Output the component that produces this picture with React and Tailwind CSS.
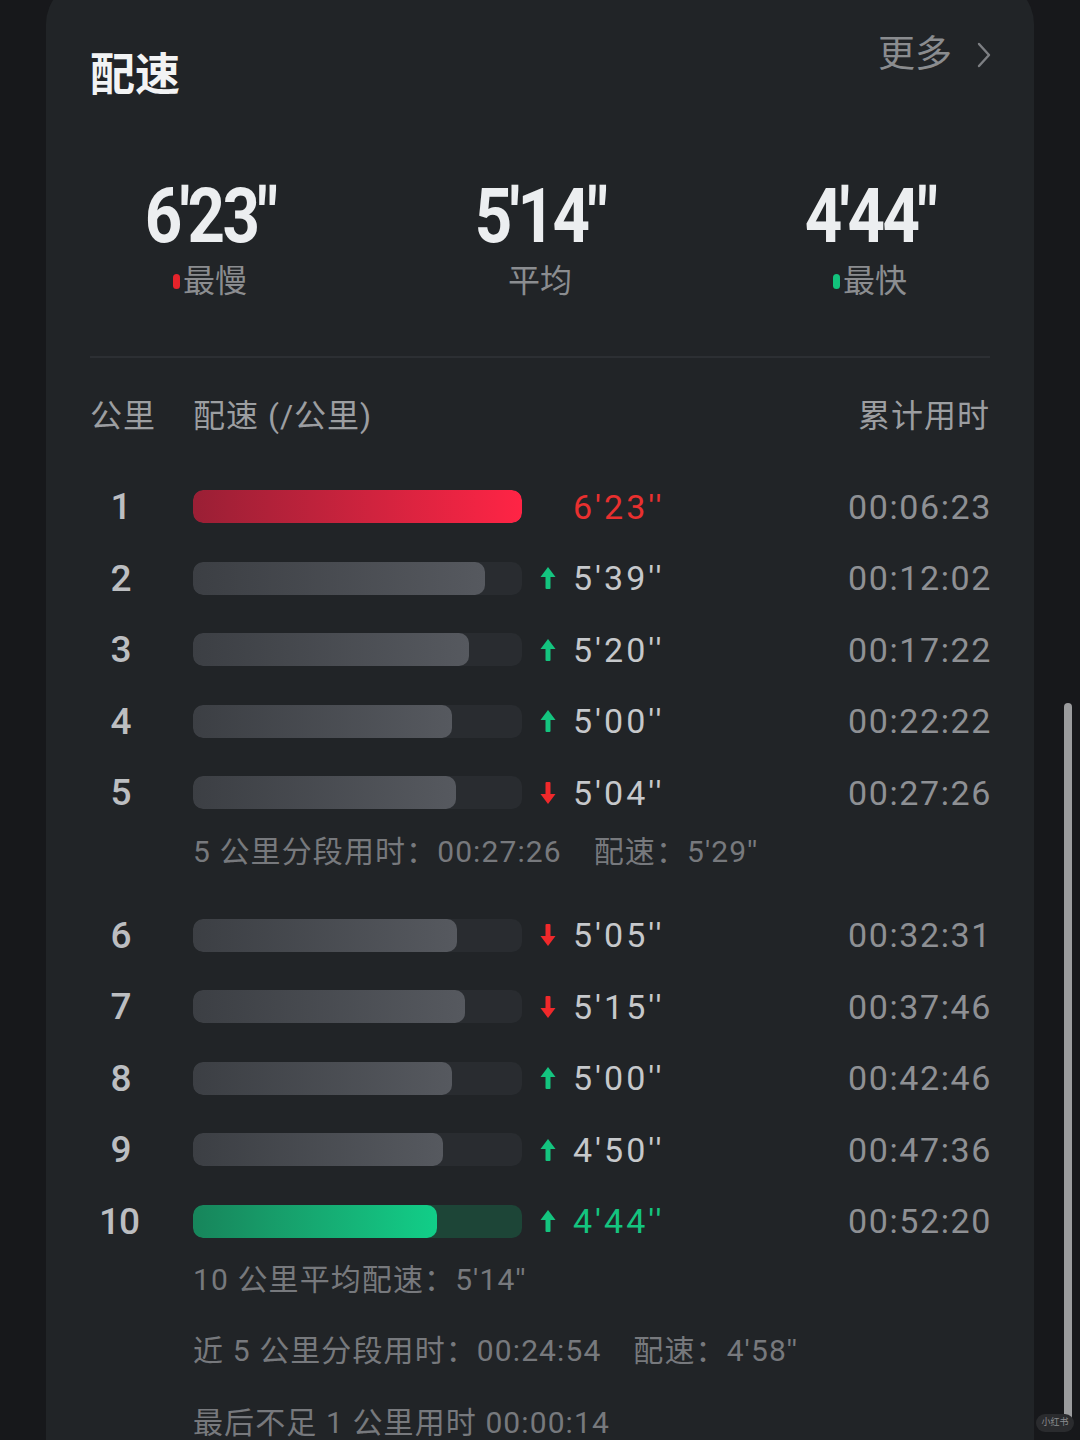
import React from "react";

const CJK = "font-['Roboto','Noto_Sans_CJK_SC',sans-serif]";

const SPLITS = [
  { km: "1", fill: 329, pace: "6'23''", time: "00:06:23", kind: "slow" },
  { km: "2", fill: 292, pace: "5'39''", time: "00:12:02", dir: "up" },
  { km: "3", fill: 276, pace: "5'20''", time: "00:17:22", dir: "up" },
  { km: "4", fill: 259, pace: "5'00''", time: "00:22:22", dir: "up" },
  { km: "5", fill: 263, pace: "5'04''", time: "00:27:26", dir: "down" },
  { km: "6", fill: 264, pace: "5'05''", time: "00:32:31", dir: "down" },
  { km: "7", fill: 272, pace: "5'15''", time: "00:37:46", dir: "down" },
  { km: "8", fill: 259, pace: "5'00''", time: "00:42:46", dir: "up" },
  { km: "9", fill: 250, pace: "4'50''", time: "00:47:36", dir: "up" },
  { km: "10", fill: 244, pace: "4'44''", time: "00:52:20", dir: "up", kind: "fast" },
];

const Arrow = ({ dir }) => {
  const color = dir === "up" ? "#14c47f" : "#f0292b";
  return (
    <svg width="16" height="24" viewBox="0 0 16 24" className={dir === "down" ? "rotate-180" : ""}>
      <polygon points="8,1 15.5,11 0.5,11" fill={color} />
      <rect x="5.5" y="10" width="5" height="13" rx="1" fill={color} />
    </svg>
  );
};

const SplitRow = ({ s }) => {
  const track =
    s.kind === "fast" ? "bg-[#1d4537]" : s.kind === "slow" ? "bg-[#2a2d31]" : "bg-[#292c30]";
  const fill =
    s.kind === "slow"
      ? "bg-gradient-to-r from-[#9a1f35] to-[#ff2445]"
      : s.kind === "fast"
      ? "bg-gradient-to-r from-[#17855b] to-[#11ce88]"
      : "bg-gradient-to-r from-[#3c3f44] to-[#56595f]";
  const paceColor =
    s.kind === "slow" ? "text-[#e9302f]" : s.kind === "fast" ? "text-[#14c47f]" : "text-[#c6c8cb]";
  return (
    <div className="flex items-center h-[71.5px]">
      <div
        className={`w-[62px] text-center text-[37px] leading-none font-medium text-[#bcbec1] font-['Roboto',sans-serif] ${
          s.km === "10" ? "tracking-[-1px] -ml-[2px]" : ""
        }`}
      >
        {s.km}
      </div>
      <div className={`ml-[41px] w-[329px] h-[33px] rounded-[10px] overflow-hidden ${track} ${s.km === "10" ? "ml-[43px]" : ""}`}>
        <div className={`h-full rounded-[10px] ${fill}`} style={{ width: s.fill }} />
      </div>
      <div className="ml-[18px] w-[16px] flex items-center">{s.dir && s.kind !== "slow" ? <Arrow dir={s.dir} /> : null}</div>
      <div className={`ml-[17px] text-[34px] leading-none tracking-[3px] font-['Roboto',sans-serif] ${paceColor}`}>
        {s.pace}
      </div>
      <div className="flex-1 -mr-[2px] text-right text-[34px] leading-none tracking-[1.6px] text-[#8e9094] font-['Roboto',sans-serif]">
        {s.time}
      </div>
    </div>
  );
};

const Stat = ({ value, label, dot }) => (
  <div className="flex flex-col items-center w-[300px]">
    <div className="h-[80px] flex items-center justify-center">
      <span className="inline-block scale-x-[0.86] text-[76px] leading-none font-bold tracking-[-3px] text-[#eceef0] font-['Roboto',sans-serif]">
        {value}
      </span>
    </div>
    <div className={`mt-[5px] h-[40px] flex items-center text-[32px] leading-none text-[#8b8d90] ${CJK}`}>
      {dot && <span className={`mr-[3px] w-[7px] h-[15px] rounded-full ${dot}`} />}
      {label}
    </div>
  </div>
);

const Note = ({ children, className = "" }) => (
  <div className={`h-[40px] flex items-center pl-[103px] text-[30px] leading-none tracking-[1.1px] text-[#77797d] ${CJK} ${className}`}>
    {children}
  </div>
);

export default function App() {
  return (
    <div className="relative w-[1080px] h-[1440px] overflow-hidden bg-[#17181b]">
      <div className="mx-[46px] -mt-[20px] rounded-t-[44px] bg-[#212427] px-[44px] pt-[57px] pb-[60px]">
        {/* header */}
        <div className="flex items-start justify-between">
          <h1 className={`mt-[16px] text-[45px] leading-[45px] font-bold text-[#f2f3f4] ${CJK}`}>配速</h1>
          <div className={`flex items-center -mr-[2px] text-[37px] leading-[36px] text-[#8a8c8f] ${CJK}`}>
            更多
            <svg width="16" height="28" viewBox="0 0 16 28" className="ml-[24px]">
              <polyline points="3,3 13,14 3,25" fill="none" stroke="#7d7f83" strokeWidth="2.4" strokeLinecap="round" strokeLinejoin="round" />
            </svg>
          </div>
        </div>

        {/* summary stats */}
        <div className="mt-[78px] flex justify-between -mx-[30px]">
          <Stat value={"6'23\""} label="最慢" dot="bg-[#e5232b]" />
          <Stat value={"5'14\""} label="平均" />
          <Stat value={"4'44\""} label="最快" dot="bg-[#12c27c]" />
        </div>

        <div className="mt-[55px] h-[2px] bg-[#2c2f33]" />

        {/* column header */}
        <div className={`mt-[38px] h-[40px] flex items-center text-[32px] leading-none tracking-[1px] text-[#9c9ea1] ${CJK}`}>
          <span className="w-[103px]">公里</span>
          <span>配速 (/公里)</span>
          <span className="ml-auto">累计用时</span>
        </div>

        <div className="mt-[35px]">
          {SPLITS.slice(0, 5).map((s) => (
            <SplitRow key={s.km} s={s} />
          ))}
        </div>
        <Note className="mt-[3px]">
          5 公里分段用时：00:27:26<span className="ml-[32px]">配速：5'29''</span>
        </Note>
        <div className="mt-[28px]">
          {SPLITS.slice(5).map((s) => (
            <SplitRow key={s.km} s={s} />
          ))}
        </div>
        <Note className="mt-[3px]">10 公里平均配速：5'14''</Note>
        <Note className="mt-[31px]">
          近 5 公里分段用时：00:24:54<span className="ml-[32px]">配速：4'58''</span>
        </Note>
        <Note className="mt-[32px]">最后不足 1 公里用时 00:00:14</Note>
      </div>

      {/* scrollbar */}
      <div className="absolute left-[1064px] top-[703px] w-[8px] h-[722px] rounded-full bg-[#9b9c9e]" />
      <div className={`absolute left-[1036px] top-[1414px] w-[38px] h-[18px] rounded-full bg-[#2a2b2e] flex items-center justify-center text-[9px] text-[#8a8b8e] ${CJK}`}>
        小红书
      </div>
    </div>
  );
}
